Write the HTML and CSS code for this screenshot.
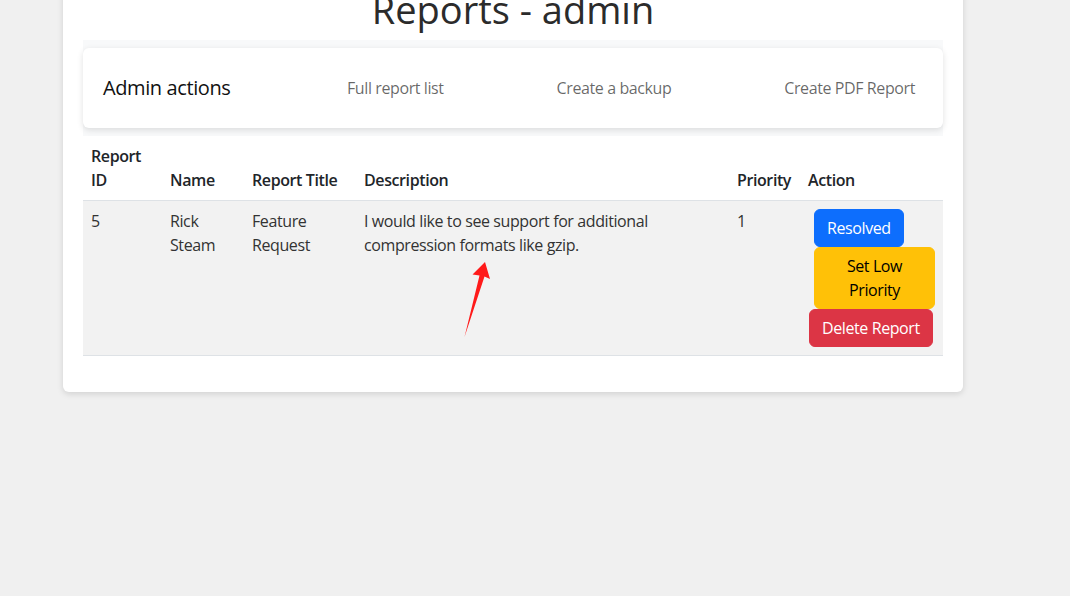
FILE: index.html
```html
<!DOCTYPE html>
<html lang="en">
<head>
<meta charset="utf-8">
<title>Reports - admin</title>
<link rel="stylesheet" href="styles.css">
</head>
<body>
<main class="card">
  <h1 class="title">Reports - admin</h1>
  <div class="nav-strip">
    <nav class="nav-card">
      <span class="brand">Admin actions</span>
      <ul class="nav-links">
        <li><a href="#">Full report list</a></li>
        <li><a href="#">Create a backup</a></li>
        <li><a href="#">Create PDF Report</a></li>
      </ul>
    </nav>
  </div>
  <table class="reports">
    <colgroup>
      <col class="c-id"><col class="c-name"><col class="c-title"><col class="c-desc"><col class="c-prio"><col class="c-act">
    </colgroup>
    <thead>
      <tr>
        <th>Report ID</th>
        <th>Name</th>
        <th class="nowrap">Report Title</th>
        <th>Description</th>
        <th class="nowrap">Priority</th>
        <th>Action</th>
      </tr>
    </thead>
    <tbody>
      <tr>
        <td>5</td>
        <td>Rick Steam</td>
        <td>Feature Request</td>
        <td>I would like to see support for additional compression formats like gzip.</td>
        <td>1</td>
        <td class="actions">
          <button class="btn btn-blue">Resolved</button>
          <button class="btn btn-yellow">Set Low Priority</button>
          <button class="btn btn-red">Delete Report</button>
        </td>
      </tr>
    </tbody>
  </table>
</main>
<svg class="arrow" width="40" height="90" viewBox="455 255 40 90" aria-hidden="true">
  <polygon points="485,262 490,279 484.5,276.5 464.5,337 479.5,275.5 472.5,274.5" fill="#ff1a1a"/>
</svg>
</body>
</html>
```

FILE: styles.css
```css
html, body {
  margin: 0;
  padding: 0;
}
body {
  background: #f0f0f0;
  font-family: "Open Sans", "DejaVu Sans", sans-serif;
  font-size: 16px;
  line-height: 24px;
  letter-spacing: -0.4px;
  color: #212529;
  position: relative;
  min-height: 596px;
}
.card {
  width: 900px;
  box-sizing: border-box;
  margin: -33px 0 0 63px;
  padding: 20px;
  background: #fff;
  border-radius: 6px;
  box-shadow: 0 2px 6px rgba(0, 0, 0, 0.13);
}
.title {
  margin: 0 0 7px;
  font-size: 38px;
  line-height: 45.6px;
  font-weight: 400;
  letter-spacing: 0;
  text-align: center;
  color: #2b2b2b;
}
.nav-strip {
  background: #f8f9fa;
  padding: 8px 0;
}
.nav-card {
  display: flex;
  align-items: center;
  background: #fff;
  border-radius: 6px;
  box-shadow: 0 2px 6px rgba(0, 0, 0, 0.12);
  padding: 20px 20px;
}
.brand {
  width: 236px;
  flex: none;
  font-size: 20px;
  line-height: 30px;
  padding: 5px 0;
  color: #111;
}
.nav-links {
  flex: 1;
  display: flex;
  justify-content: space-between;
  list-style: none;
  margin: 0;
  padding: 0;
}
.nav-links a {
  display: block;
  padding: 8px;
  color: rgba(0, 0, 0, 0.6);
  text-decoration: none;
}
.reports {
  width: 100%;
  table-layout: fixed;
  border-collapse: collapse;
  margin-bottom: 16px;
}
.c-id { width: 79px; }
.c-name { width: 82px; }
.c-title { width: 112px; }
.c-desc { width: 373px; }
.c-prio { width: 71px; }
.c-act { width: 143px; }
.reports th,
.reports td {
  padding: 8px;
  text-align: left;
  vertical-align: bottom;
  border-bottom: 1px solid #dee2e6;
}
.reports th {
  font-weight: 600;
  color: #212529;
}
.reports th.nowrap {
  white-space: nowrap;
}
.reports td {
  vertical-align: top;
  background: #f2f2f2;
  color: #333;
}
.actions {
  display: flex;
  flex-direction: column;
  align-items: flex-start;
}
.btn {
  font: inherit;
  letter-spacing: inherit;
  line-height: 24px;
  padding: 6px 12px;
  border: 1px solid transparent;
  border-radius: 6px;
  text-align: center;
  cursor: pointer;
}
.btn-blue {
  margin-left: 6px;
  background: #0d6efd;
  border-color: #0d6efd;
  color: #fff;
}
.btn-yellow {
  margin-left: 6px;
  background: #ffc107;
  border-color: #ffc107;
  color: #000;
}
.btn-red {
  margin-left: 1px;
  white-space: nowrap;
  background: #dc3545;
  border-color: #dc3545;
  color: #fff;
}
.arrow {
  position: absolute;
  left: 455px;
  top: 255px;
}
```
